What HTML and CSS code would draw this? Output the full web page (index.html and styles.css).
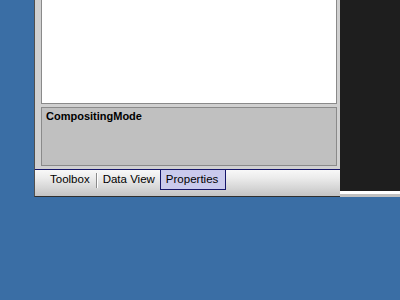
FILE: index.html
```html
<!DOCTYPE html>
<html>
<head>
<meta charset="utf-8">
<link rel="stylesheet" href="styles.css">
</head>
<body>
<div class="desktop">
  <div class="window">
    <div class="frame">
      <div class="list-panel"></div>
      <div class="desc-panel"><span class="desc-title">CompositingMode</span></div>
    </div>
    <div class="tabstrip">
      <span class="tab first">Toolbox</span>
      <span class="sep"></span>
      <span class="tab second">Data View</span>
      <span class="tab active">Properties</span>
    </div>
  </div>
  <div class="side">
    <div class="side-dark"></div>
    <div class="side-white"></div>
    <div class="side-grey"></div>
  </div>
</div>
</body>
</html>
```
FILE: styles.css
```css
html, body {
  margin: 0;
  padding: 0;
  background: #3a6ea5;
  width: 400px;
  height: 300px;
  overflow: hidden;
  font-family: "Liberation Sans", Arial, "Noto Sans CJK JP", sans-serif;
}
.desktop {
  display: flex;
  padding-left: 34px;
  align-items: flex-start;
}
.window {
  width: 305px;
  height: 196px;
  border-left: 1px solid #505050;
  border-bottom: 1px solid #303030;
  background: #c8c8c8;
  display: flex;
  flex-direction: column;
}
.frame {
  padding: 0 3px 3px 6px;
  display: flex;
  flex-direction: column;
  gap: 3px;
  background: #d0d0d0;
}
.list-panel {
  height: 103px;
  background: #ffffff;
  border: 1px solid #8a8a8a;
  border-top: none;
}
.desc-panel {
  box-sizing: border-box;
  height: 59px;
  background: #c0c0c0;
  border: 1px solid #8a8a8a;
  padding: 2px 4px;
  font-size: 11px;
  line-height: 12px;
}
.desc-title {
  font-weight: bold;
  color: #000;
}
.tabstrip {
  flex: 1;
  border-top: 1px solid #16166a;
  background: linear-gradient(#f8f8f8, #ececec 30%, #c4c4c4);
  display: flex;
  align-items: flex-start;
  font-size: 11.5px;
  color: #000;
}
.tab {
  height: 19px;
  line-height: 18px;
  box-sizing: border-box;
}
.tab.first {
  margin-left: 15px;
}
.sep {
  width: 1px;
  height: 15px;
  margin-top: 3px;
  margin-left: 6px;
  background: #8a8a8a;
  border-right: 1px solid #ffffff;
}
.tab.second {
  margin-left: 5px;
}
.tab.active {
  margin-left: 5px;
  padding: 0 7px 0 5px;
  height: 20px;
  background: #cacaec;
  border: 1px solid #16166a;
  border-top: none;
}
.side {
  width: 60px;
  display: flex;
  flex-direction: column;
}
.side-dark {
  height: 191px;
  background: #1e1e1e;
}
.side-white {
  height: 3px;
  background: #ffffff;
}
.side-grey {
  height: 3px;
  background: #c0c0c0;
}
```
